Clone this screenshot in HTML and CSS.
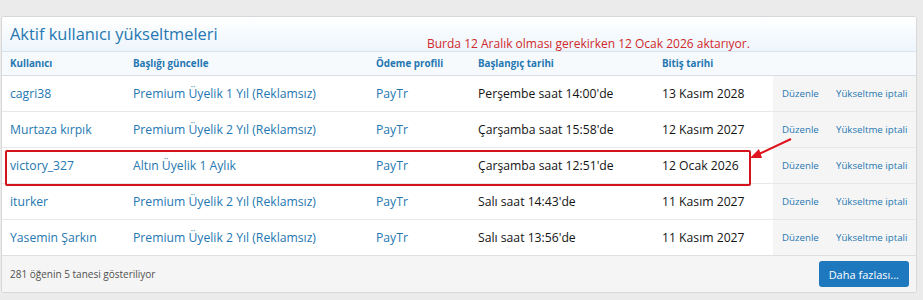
FILE: index.html
```html
<!DOCTYPE html>
<html lang="tr">
<head>
  <meta charset="UTF-8"/>
  <title>Aktif kullanıcı yükseltmeleri</title>
  <link rel="stylesheet" href="styles.css">
</head>
<body>
  <div class="page">
    <div class="block">
      <h2 class="block-header">Aktif kullanıcı yükseltmeleri</h2>
      <span class="note">Burda 12 Aralık olması gerekirken 12 Ocak 2026 aktarıyor.</span>

      <table class="data-list">
        <colgroup>
          <col class="c-user"><col class="c-title"><col class="c-pay">
          <col class="c-start"><col class="c-end"><col class="c-edit"><col>
        </colgroup>
        <thead>
          <tr>
            <th>Kullanıcı</th><th>Başlığı güncelle</th><th>Ödeme profili</th>
            <th>Başlangıç tarihi</th><th>Bitiş tarihi</th><th class="act"></th><th class="act"></th>
          </tr>
        </thead>
        <tbody>
          <tr>
            <td><a href="#">cagri38</a></td><td><a href="#">Premium Üyelik 1 Yıl (Reklamsız)</a></td><td><a href="#">PayTr</a></td>
            <td>Perşembe saat 14:00'de</td><td>13 Kasım 2028</td>
            <td class="act"><a href="#">Düzenle</a></td><td class="act"><a href="#">Yükseltme iptali</a></td>
          </tr>
          <tr>
            <td><a href="#">Murtaza kırpık</a></td><td><a href="#">Premium Üyelik 2 Yıl (Reklamsız)</a></td><td><a href="#">PayTr</a></td>
            <td>Çarşamba saat 15:58'de</td><td>12 Kasım 2027</td>
            <td class="act"><a href="#">Düzenle</a></td><td class="act"><a href="#">Yükseltme iptali</a></td>
          </tr>
          <tr>
            <td><a href="#">victory_327</a></td><td><a href="#">Altın Üyelik 1 Aylık</a></td><td><a href="#">PayTr</a></td>
            <td>Çarşamba saat 12:51'de</td><td>12 Ocak 2026</td>
            <td class="act"><a href="#">Düzenle</a></td><td class="act"><a href="#">Yükseltme iptali</a></td>
          </tr>
          <tr>
            <td><a href="#">iturker</a></td><td><a href="#">Premium Üyelik 2 Yıl (Reklamsız)</a></td><td><a href="#">PayTr</a></td>
            <td>Salı saat 14:43'de</td><td>11 Kasım 2027</td>
            <td class="act"><a href="#">Düzenle</a></td><td class="act"><a href="#">Yükseltme iptali</a></td>
          </tr>
          <tr>
            <td><a href="#">Yasemin Şarkın</a></td><td><a href="#">Premium Üyelik 2 Yıl (Reklamsız)</a></td><td><a href="#">PayTr</a></td>
            <td>Salı saat 13:56'de</td><td>11 Kasım 2027</td>
            <td class="act"><a href="#">Düzenle</a></td><td class="act"><a href="#">Yükseltme iptali</a></td>
          </tr>
        </tbody>
      </table>

      <div class="block-footer">
        <span class="count">281 öğenin 5 tanesi gösteriliyor</span>
        <button class="more">Daha fazlası...</button>
      </div>

      <!-- annotation drawn on the screenshot -->
      <div class="mark-box"></div>
      <svg class="mark-arrow" width="60" height="40" viewBox="0 0 60 40">
        <line x1="48" y1="4" x2="14" y2="20" stroke="#e0141e" stroke-width="2"/>
        <polygon points="7,23 16,14 19,23" fill="#e0141e"/>
      </svg>
    </div>
  </div>
</body>
</html>
```

FILE: styles.css
```css
body {
  margin: 0;
  background: #ebebeb;
  font-family: "Segoe UI", "Open Sans", sans-serif;
  font-size: 12.2px;
  color: #141414;
}
a { color: #2577b1; text-decoration: none; }

.page { padding: 16px 6px 8px 1px; }
.block {
  position: relative;
  background: #fff;
  border: 1px solid #d8d8d8;
  border-radius: 3px;
  overflow: hidden;
}
.block-header {
  margin: 0;
  height: 34px;
  padding: 0 8px;
  line-height: 34px;
  font-size: 16.4px;
  font-weight: normal;
  color: #2577b1;
  background: linear-gradient(to bottom, #ffffff, #edf5fc);
  border-bottom: 1px solid #dbe4ec;
}
.note {
  position: absolute;
  left: 425px;
  top: 18px;
  font-size: 12px;
  color: #d0282c;
}

.data-list { width: 100%; border-collapse: collapse; table-layout: fixed; }
.c-user { width: 123px; }
.c-title { width: 243px; }
.c-pay { width: 102px; }
.c-start { width: 184px; }
.c-end { width: 119px; }
.c-edit { width: 54px; }
.data-list th {
  height: 23px;
  padding: 0 8px;
  text-align: left;
  font-size: 9.8px;
  font-weight: bold;
  color: #2577b1;
  background: #f7fafd;
  border-bottom: 1px solid #d8dee5;
}
.data-list td {
  height: 35px;
  padding: 0 8px;
  white-space: nowrap;
  border-bottom: 1px solid #e8e8e8;
}
.data-list tr:last-child td { border-bottom: 1px solid #e0e0e0; }
.data-list .act { background: #f5f5f5; font-size: 9.7px; padding: 0 0 0 9px; }
.data-list th.act { background: #f7fafd; }

.block-footer {
  display: flex;
  align-items: center;
  justify-content: space-between;
  height: 36px;
  padding: 0 7px 0 8px;
  background: #f5f5f5;
}
.count { font-size: 10px; color: #505050; }
.more {
  font-family: inherit;
  font-size: 11px;
  white-space: nowrap;
  color: #fff;
  background: #1e78be;
  border: none;
  border-radius: 3px;
  padding: 0 10px;
  height: 26px;
}

.mark-box {
  position: absolute;
  left: 3px;
  top: 133px;
  width: 742px;
  height: 32px;
  border: 2px solid #d4131c;
  border-radius: 2px;
}
.mark-arrow { position: absolute; left: 741px; top: 118px; }
```
